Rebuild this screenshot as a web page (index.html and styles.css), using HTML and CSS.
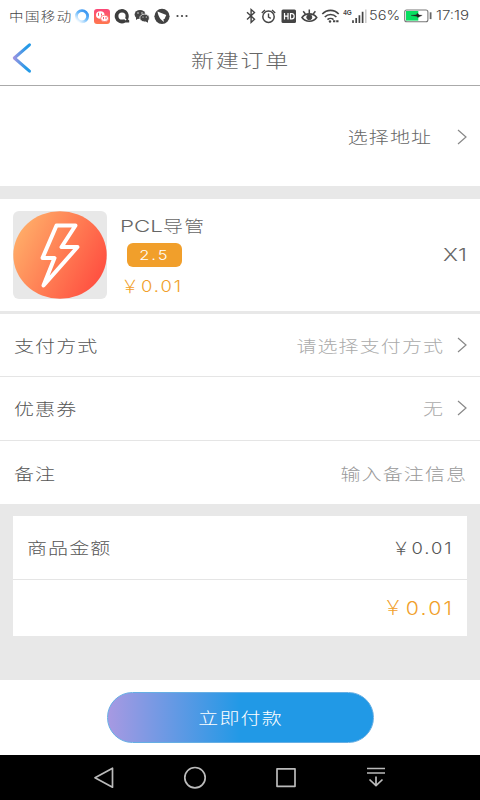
FILE: index.html
```html
<!DOCTYPE html>
<html lang="zh-CN">
<head>
<meta charset="utf-8">
<title>新建订单</title>
<link rel="stylesheet" href="styles.css">
</head>
<body>
<div class="status">
  <span class="carrier"><span class="cjk">中国移动</span></span>
  <svg class="status-left" width="114" height="20" viewBox="75 5 114 20">
    <defs>
      <linearGradient id="ring" x1="1" y1="0" x2="0.2" y2="1"><stop offset="0" stop-color="#2f8cee"/><stop offset=".5" stop-color="#68b8fa"/><stop offset="1" stop-color="#f5fbff"/></linearGradient>
      <linearGradient id="red" x1="0" y1="0" x2="0" y2="1"><stop offset="0" stop-color="#fb4778"/><stop offset="1" stop-color="#ff784d"/></linearGradient>
    </defs>
    <circle cx="82" cy="15.3" r="5.6" fill="none" stroke="url(#ring)" stroke-width="2.8"/>
    <rect x="94" y="8" width="16" height="15" rx="3" fill="url(#red)"/>
    <ellipse cx="100.3" cy="14" rx="4.3" ry="3.8" fill="#fff"/>
    <ellipse cx="104.6" cy="17.4" rx="3.9" ry="3.2" fill="#fff" stroke="#fd6560" stroke-width=".7"/>
    <path d="M98.5 11.8v3M101.5 12.5v2M103.5 16v2.2M106 16v2.2" stroke="#fb5970"/>
    <path d="M122 8a7.2 7.2 0 1 0 3.4 13.5h3.8v-2.3l-1.2-.8A7.2 7.2 0 0 0 122 8z" fill="#3e3e3e"/>
    <circle cx="122" cy="15" r="3.6" fill="#fff"/><path d="M122 15l4 4" stroke="#fff" stroke-width="1.5"/>
    <ellipse cx="140" cy="13.5" rx="5.4" ry="4.5" fill="#444"/><path d="M136 16v3l3-2z" fill="#444"/>
    <ellipse cx="144.6" cy="17" rx="4.8" ry="3.9" fill="#444" stroke="#fff" stroke-width=".8"/><path d="M145 20l3 1.7v-3z" fill="#444"/>
    <g fill="#fff"><circle cx="138" cy="12" r=".7"/><circle cx="142" cy="12" r=".7"/><circle cx="143" cy="16" r=".6"/><circle cx="146.3" cy="16" r=".6"/></g>
    <circle cx="162" cy="15.3" r="7.6" fill="#424242"/>
    <path d="M157.5 10.5l8.8 3.4-1.8 4-1 .2.3 3-3.3-3.2c-1.3-1.4-2.6-4.4-3-7.4z" fill="#fff"/>
    <g fill="#444"><circle cx="177.5" cy="15" r="1.1"/><circle cx="182" cy="15" r="1.1"/><circle cx="186.5" cy="15" r="1.1"/></g>
  </svg>
  <svg class="status-right" width="122" height="20" viewBox="245 5 122 20" fill="none" stroke="#444">
    <path d="M247 11.2l7.5 7-3.4 3.2V8.6l3.4 3-7.5 7" stroke-width="1.4"/>
    <circle cx="268.5" cy="15.7" r="5.7" stroke-width="1.5"/><path d="M268.5 12.5v3.5l2.3 1.4M261.8 12l3.2-3M275.2 12l-3.2-3" stroke-width="1.4"/>
    <rect x="281.5" y="8.5" width="14.5" height="13.5" rx="1.5" fill="#444" stroke="none"/>
    <path d="M284.5 12v6.5M288 12v6.5M284.5 15.2h3.5M290.5 12.6v5.3h1.4c3 0 3-5.3 0-5.3z" stroke="#fff" stroke-width="1.2"/>
    <path d="M302 16.5c3.4-4.8 11.3-4.8 14.7 0-3.4 5-11.3 5-14.7 0z" stroke-width="1.6"/><circle cx="309.3" cy="16.2" r="2.5" fill="#444"/>
    <path d="M303.2 10.2l2.2 2.8M309.3 8.5v3.4M315.4 10.2l-2.2 2.8" stroke-width="1.5"/>
    <path d="M322.3 13c4.5-4.8 12-4.8 16.4 0M324.8 16c3.2-3.3 8.4-3.3 11.6 0M327.5 18.6c1.6-1.5 4.4-1.5 6 0" stroke-width="1.6"/><circle cx="330" cy="20.5" r="1.2" fill="#444" stroke="none"/>
    <path d="M333 20.3h2.3M336.2 20.3h2.300" stroke-width="2"/>
    <text class="network" x="343.2" y="13.7" textLength="8.5" lengthAdjust="spacingAndGlyphs">4G</text>
    <path d="M353 19.3v2.7M356.2 17v5M359.4 14.3v7.7M362.6 10.8v11.2" stroke-width="1.7"/><path d="M365.8 8.5v13.5" stroke="#c8c8c8" stroke-width="1.5"/>
  </svg>
  <span class="percent"><span class="latin">56%</span></span>
  <svg class="battery" width="29" height="14" viewBox="404 8 29 14">
    <rect x="404.7" y="9" width="23.2" height="11.7" rx="2" fill="#fff" stroke="#777" stroke-width="1.1"/>
    <rect x="406" y="10" width="12.3" height="9.6" fill="#08df61"/>
    <path d="M411 14.4l5.5-.6.7-1.6 2.2 1.9 2.8.2-4.4 2.3-1-1.4z" fill="#222" stroke="#222" stroke-width=".3"/>
    <path d="M430.6 11.3v6.8" stroke="#666" stroke-width="1.8"/>
  </svg>
  <span class="clock"><span class="latin">17:19</span></span>
</div>
<header class="header">
  <svg class="back" width="20" height="32" viewBox="0 0 20 32"><defs><linearGradient id="back" gradientUnits="userSpaceOnUse" x1="1" y1="0" x2="14" y2="0"><stop stop-color="#a793e1"/><stop offset="1" stop-color="#259ae7"/></linearGradient></defs><path d="M17.5 2.8L2.3 16l15.2 13.2" fill="none" stroke="url(#back)" stroke-width="3" stroke-linecap="round" stroke-linejoin="round"/></svg>
  <h1 class="title"><span class="cjk">新建订单</span></h1>
</header>
<section class="address">
  <span class="cjk">选择地址</span>
  <svg class="arrow" width="10" height="16" viewBox="0 0 10 16"><path d="M1 1l8 7-8 7"/></svg>
</section>
<section class="product">
  <svg class="photo" width="94" height="88" viewBox="0 0 94 88">
    <defs><linearGradient id="orange" x1="0" y1=".25" x2="1" y2=".75"><stop stop-color="#ffaf69"/><stop offset="1" stop-color="#ff4c3f"/></linearGradient></defs>
    <rect width="94" height="88" rx="6" fill="#e8e8e8"/><ellipse cx="47" cy="44" rx="46.7" ry="43.8" fill="url(#orange)"/>
    <path d="M43.5 14.5H62.5L48.5 36H64.5L30.5 74.5L41.5 47H29.5z" fill="none" stroke="#fff" stroke-width="4" stroke-linecap="round" stroke-linejoin="round"/>
  </svg>
  <div class="details">
    <div class="name"><span class="latin">PCL</span><span class="cjk">导管</span></div>
    <div class="badge"><span class="latin">2.5</span></div>
    <div class="price"><span class="yen">￥</span><span class="latin">0.01</span></div>
  </div>
  <span class="quantity"><span class="latin">X1</span></span>
</section>
<section class="options">
  <div class="option"><span class="cjk">支付方式</span><span class="value"><span class="cjk">请选择支付方式</span><svg class="arrow" width="10" height="16" viewBox="0 0 10 16"><path d="M1 1l8 7-8 7"/></svg></span></div>
  <div class="option"><span class="cjk">优惠券</span><span class="value"><span class="cjk">无</span><svg class="arrow" width="10" height="16" viewBox="0 0 10 16"><path d="M1 1l8 7-8 7"/></svg></span></div>
  <div class="option"><span class="cjk">备注</span><span class="value placeholder"><span class="cjk">输入备注信息</span></span></div>
</section>
<section class="summary">
  <div class="card">
    <div class="amount"><span class="cjk">商品金额</span><span class="price"><span class="yen">￥</span><span class="latin">0.01</span></span></div>
    <div class="total"><span class="price"><span class="yen">￥</span><span class="latin">0.01</span></span></div>
  </div>
</section>
<footer class="footer"><button class="pay"><span class="cjk">立即付款</span></button></footer>
<nav class="nav">
  <svg width="22" height="24" viewBox="0 0 22 24"><path d="M19.5 2.2v19L2 11.7z"/></svg>
  <svg width="24" height="24" viewBox="0 0 24 24"><circle cx="12" cy="11.7" r="10.2"/></svg>
  <svg width="22" height="24" viewBox="0 0 22 24"><rect x="1" y="2.8" width="18" height="17.5"/></svg>
  <svg width="20" height="24" viewBox="0 0 20 24"><path d="M1 2.5h18M1 7h18M10 10.5v9M3.5 13.5l6.5 6.2 6.5-6.2"/></svg>
</nav>
</body>
</html>
```
FILE: styles.css
```css
* { box-sizing: border-box; }
body { margin: 0; width: 480px; height: 800px; overflow: hidden; background: #fff; color: #555; font-family: "Liberation Sans", "Noto Sans CJK SC", sans-serif; }
svg { display: block; flex: none; }
.cjk { display: inline-block; font-family: "Noto Sans CJK SC", sans-serif; font-size: 20px; font-weight: 300; line-height: 26px; letter-spacing: 1.1px; margin-right: -1.1px; transform: translateY(-.3px) scaleY(.82); white-space: nowrap; }
.latin { display: inline-block; font-family: Inter, sans-serif; font-weight: 300; white-space: nowrap; }
.yen { display: inline-block; font-family: "Noto Sans CJK SC", sans-serif; font-weight: 300; }
.status { display: flex; align-items: center; height: 31px; padding-left: 9px; color: #444; }
.carrier { width: 66px; }
.carrier .cjk { font-size: 14.5px; letter-spacing: 1.4px; transform: scaleY(.9); }
.status-right { margin-left: 56px; }
.network { font: bold 8px "Liberation Sans", sans-serif; fill: #444; stroke: none; }
.percent { width: 34px; margin-left: 2px; margin-top: -1px; }
.percent .latin { font-size: 13px; transform: scaleX(1.12); transform-origin: left; }
.battery { margin-left: 1px; }
.clock { margin-left: 3px; margin-top: -1px; }
.clock .latin { font-size: 13px; transform: scaleX(1.16); transform-origin: left; }
.header { display: flex; align-items: center; height: 55px; border-bottom: 1px solid #aaa; padding: 0 12px; }
.back { margin-top: -1px; }
.title { flex: 1; margin: 6px 19px 0 0; text-align: center; font-size: 22px; font-weight: 300; line-height: 26px; color: #666; }
.title .cjk { font-size: 23px; letter-spacing: 1.7px; margin-right: 0; transform: scaleY(.82); }
.address { display: flex; justify-content: flex-end; align-items: center; height: 100px; padding: 1px 13px 0 0; gap: 26px; color: #666; }
.arrow { fill: none; stroke: #888; stroke-width: 1.2; }
.product { display: flex; height: 128px; border-top: 13px solid #e8e8e8; border-bottom: 3px solid #e8e8e8; padding: 12px 13px 0; }
.details { flex: 1; padding-left: 13px; }
.name { display: flex; align-items: center; height: 29px; color: #666; }
.name .latin { font-size: 16.5px; width: 43px; transform: scaleX(1.35); transform-origin: left; }
.badge { display: flex; align-items: center; justify-content: center; width: 55px; height: 24px; margin: 3px 0 0 6.5px; border-radius: 6px; background: #f19f2b; color: #fff; }
.badge .latin { font-size: 13.5px; letter-spacing: 1.6px; margin-right: -1.6px; transform: scaleX(1.22); }
.price { display: flex; align-items: center; color: #f19f2b; }
.price .yen { font-size: 18px; line-height: 24px; transform: translateY(-.7px); }
.price .latin { width: 40px; margin-left: 2px; font-size: 16px; letter-spacing: 1.7px; transform: scaleX(1.15); transform-origin: left; }
.details .price { height: 38px; padding-left: 1px; }
.quantity { align-self: flex-start; margin-top: 34px; color: #666; }
.quantity .latin { font-size: 17px; transform: scaleX(1.33); transform-origin: right; }
.option { display: flex; align-items: center; justify-content: space-between; height: 64px; padding: 1px 13px 0 14px; border-bottom: 1px solid #e5e5e5; color: #555; }
.option:first-child { height: 63px; }
.option:last-child { height: 63px; border-bottom: 0; padding-top: 3px; }
.value { display: flex; align-items: center; gap: 14px; color: #aaa; }
.value .arrow { margin-top: -2px; }
.placeholder { color: #999; padding-right: 1px; }
.summary { height: 176px; padding: 12px 13px; background: #e8e8e8; }
.card { height: 120px; background: #fff; }
.amount { display: flex; align-items: center; justify-content: space-between; height: 63.5px; border-bottom: 1px solid #e5e5e5; padding: 1px 14px 0; }
.amount .price { color: #555; }
.total { display: flex; justify-content: flex-end; align-items: center; height: 57px; padding-right: 14px; }
.summary .price .latin { transform-origin: right; letter-spacing: 1.7px; width: auto; margin: 0 -.7px 0 7px; }
.summary .total .yen { font-size: 20px; }
.summary .total .latin { font-size: 18.5px; letter-spacing: 1.9px; margin: 0 -1px 0 9px; }
.footer { height: 75px; padding-top: 12px; background: #fff; }
.pay { display: block; width: 267px; height: 51px; margin: 0 auto; padding: 0; border: 1px solid #65aee4; border-radius: 26px; color: #fff; background: linear-gradient(90deg, #a899e2, #2199e6 50%); background-origin: border-box; }
.nav { display: flex; align-items: center; justify-content: space-between; height: 45px; padding: 0 94px 0 93px; background: #000; fill: none; stroke: #bbb; stroke-width: 1.7; stroke-linejoin: round; }
```
